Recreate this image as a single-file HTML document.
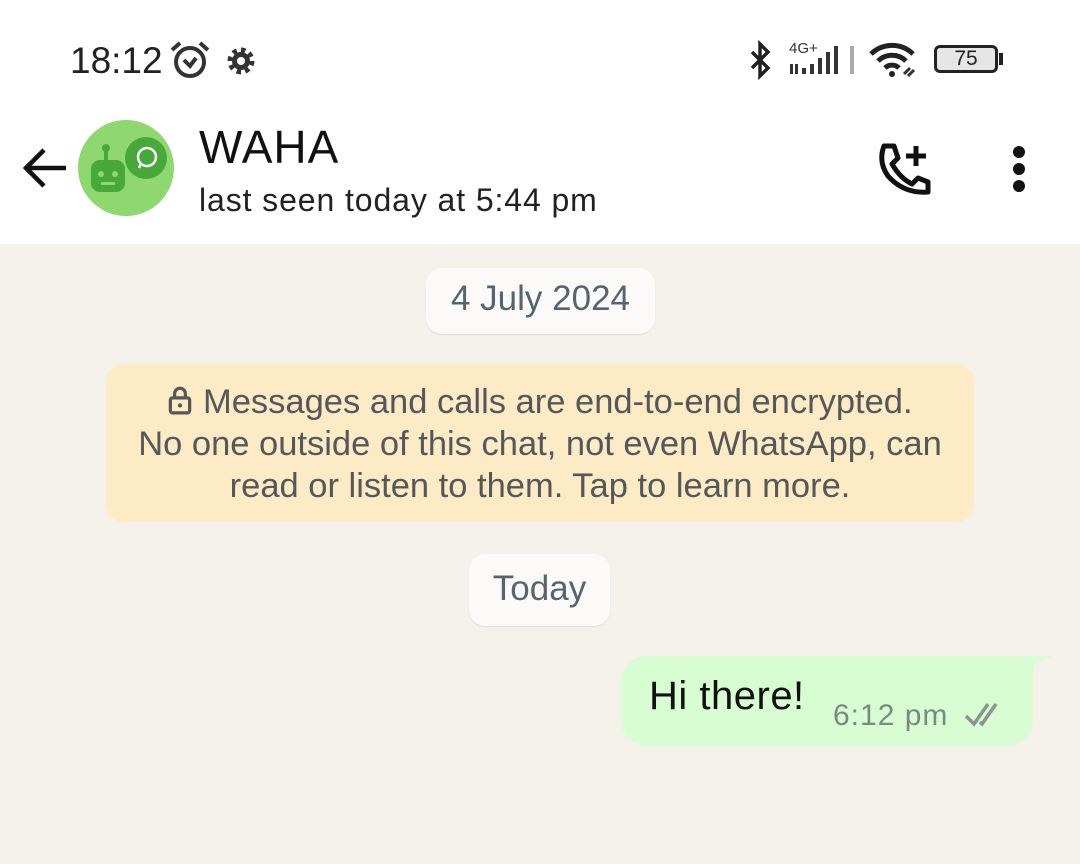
<!DOCTYPE html>
<html><head><style>
*{margin:0;padding:0;box-sizing:border-box}
body{width:1080px;height:864px;overflow:hidden;font-family:"Liberation Sans",sans-serif;background:#f4f0ea;position:relative}
.top{position:absolute;left:0;top:0;width:1080px;height:244px;background:#fff}
.abs{position:absolute}
.chip{position:absolute;background:#fbfaf8;border-radius:16px;color:#54656f;font-size:35px;text-align:center;box-shadow:0 1px 1px rgba(0,0,0,.08)}
</style></head><body>
<div class="top">
<div class="abs" style="left:70px;top:40px;font-size:37px;color:#222">18:12</div>
<svg class="abs" style="left:168px;top:40px" width="44" height="40" viewBox="0 0 44 40"><circle cx="22" cy="22" r="14" fill="none" stroke="#333" stroke-width="4"/><path d="M4 10 L12 3 M40 10 L32 3" stroke="#333" stroke-width="4"/><path d="M16 20 L22 26 L28 18" fill="none" stroke="#333" stroke-width="4"/></svg>
<svg class="abs" style="left:224px;top:44px" width="34" height="34" viewBox="0 0 34 34"><circle cx="17" cy="17" r="10" fill="none" stroke="#333" stroke-width="7" stroke-dasharray="4 3.8"/><circle cx="17" cy="17" r="9" fill="#333"/><circle cx="17" cy="17" r="4" fill="#fff"/></svg>
<svg class="abs" style="left:748px;top:40px" width="26" height="40" viewBox="0 0 26 40"><path d="M4 12 L20 28 L12 36 L12 4 L20 12 L4 28" fill="none" stroke="#222" stroke-width="3.5"/></svg>
<div class="abs" style="left:789px;top:40px;font-size:15px;color:#333">4G+</div>
<svg class="abs" style="left:788px;top:42px" width="70" height="34" viewBox="0 0 70 34"><rect x="2" y="22" width="3" height="10" fill="#333"/><rect x="7" y="22" width="3" height="10" fill="#333"/><path d="M14 26h4v6h-4zM22 22h4v10h-4zM30 16h4v16h-4zM38 10h4v22h-4zM46 4h4v28h-4z" fill="#333"/><rect x="62" y="4" width="4" height="28" fill="#aaa"/></svg>
<svg class="abs" style="left:868px;top:40px" width="56" height="40" viewBox="0 0 56 40"><path d="M3 14 A30 30 0 0 1 45 14" fill="none" stroke="#222" stroke-width="5"/><path d="M10 21 A20 20 0 0 1 38 21" fill="none" stroke="#222" stroke-width="5"/><path d="M17 28 A10 10 0 0 1 31 28" fill="none" stroke="#222" stroke-width="5"/><circle cx="24" cy="34" r="3" fill="#222"/><path d="M36 34 l6 -6 M40 36 l6 -6" stroke="#333" stroke-width="3"/></svg>
<div class="abs" style="left:934px;top:45px;width:64px;height:28px;border:3px solid #222;border-radius:6px;background:#e6e6e6;font-size:21px;text-align:center;line-height:22px;color:#222">75</div>
<div class="abs" style="left:999px;top:53px;width:4px;height:12px;background:#222"></div>

<svg class="abs" style="left:20px;top:144px" width="50" height="48" viewBox="0 0 50 48"><path d="M46 24 H6 M24 6 L6 24 L24 42" fill="none" stroke="#111" stroke-width="4.5"/></svg>
<div class="abs" style="left:78px;top:120px;width:96px;height:96px;border-radius:50%;background:#8fd870"></div>
<div class="abs" style="left:125px;top:137px;width:42px;height:42px;border-radius:50%;background:#47a93a"></div>
<svg class="abs" style="left:133px;top:144px" width="28" height="28" viewBox="0 0 28 28"><circle cx="14" cy="13" r="9" fill="none" stroke="#fff" stroke-width="2.5"/><path d="M6 24 L8 19" stroke="#fff" stroke-width="2.5"/></svg>
<svg class="abs" style="left:88px;top:142px" width="48" height="60" viewBox="0 0 48 60"><circle cx="18" cy="6" r="4" fill="#47a93a"/><rect x="16" y="6" width="4" height="12" fill="#47a93a"/><rect x="3" y="18" width="34" height="32" rx="9" fill="#47a93a"/><circle cx="13" cy="32" r="3" fill="#8fd870"/><circle cx="27" cy="32" r="3" fill="#8fd870"/><rect x="13" y="40" width="14" height="3" fill="#8fd870"/></svg>
<div class="abs" style="left:199px;top:120px;font-size:46px;color:#111;letter-spacing:1px">WAHA</div>
<div class="abs" style="left:199px;top:182px;font-size:32px;color:#222;letter-spacing:0.9px">last seen today at 5:44 pm</div>
<svg class="abs" style="left:874px;top:142px" width="60" height="56" viewBox="0 0 60 56"><path d="M10 4 L20 4 L24 16 L18 22 Q26 36 38 42 L44 36 L54 40 L54 50 Q30 52 14 34 Q4 20 10 4Z" fill="none" stroke="#111" stroke-width="5" stroke-linejoin="round"/><path d="M42 4 V24 M32 14 H52" stroke="#111" stroke-width="5"/></svg>
<div class="abs" style="left:1013px;top:146px;width:12px;height:12px;border-radius:50%;background:#111"></div>
<div class="abs" style="left:1013px;top:163px;width:12px;height:12px;border-radius:50%;background:#111"></div>
<div class="abs" style="left:1013px;top:180px;width:12px;height:12px;border-radius:50%;background:#111"></div>
</div>

<div class="chip" style="left:426px;top:268px;width:229px;height:66px;line-height:62px">4 July 2024</div>
<div class="abs" style="left:106px;top:364px;width:868px;height:158px;background:#fcebc5;border-radius:18px;color:#54585a;font-size:34.5px;text-align:center;line-height:42px;padding-top:17px;white-space:nowrap">
<svg width="26" height="30" viewBox="0 0 24 28" style="vertical-align:-2px"><rect x="3" y="12" width="18" height="14" rx="2" fill="none" stroke="#54585a" stroke-width="3"/><path d="M7 12 V8 a5 5 0 0 1 10 0 V12" fill="none" stroke="#54585a" stroke-width="3"/><circle cx="12" cy="19" r="2" fill="#54585a"/></svg> Messages and calls are end-to-end encrypted.<br>No one outside of this chat, not even WhatsApp, can<br>read or listen to them. Tap to learn more.</div>
<div class="chip" style="left:469px;top:554px;width:141px;height:72px;line-height:70px">Today</div>
<div class="abs" style="left:621px;top:656px;width:412px;height:90px;background:#d9fdd3;border-radius:26px 0 26px 26px"></div>
<div class="abs" style="left:1020px;top:656px;width:0;height:0;border-top:16px solid #d9fdd3;border-right:32px solid transparent"></div>
<div class="abs" style="left:649px;top:674px;font-size:40px;color:#111;letter-spacing:0.5px">Hi there!</div>
<div class="abs" style="left:833px;top:699px;font-size:30px;color:#7a8a80;letter-spacing:1px">6:12 pm</div>
<svg class="abs" style="left:962px;top:700px" width="48" height="30" viewBox="0 0 48 30"><path d="M4 16 L12 24 L26 4 M18 22 L20 24 L34 4" fill="none" stroke="#8a9590" stroke-width="3.5"/></svg>
</body></html>
